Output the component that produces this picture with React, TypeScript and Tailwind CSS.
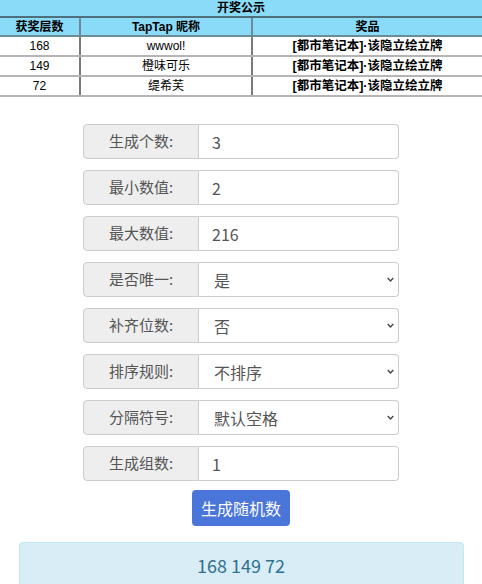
import { useState } from "react";

type Winner = { floor: number; nick: string; prize: string };

const winners: Winner[] = [
    { floor: 168, nick: "wwwol!", prize: "[都市笔记本]·该隐立绘立牌" },
    { floor: 149, nick: "橙味可乐", prize: "[都市笔记本]·该隐立绘立牌" },
    { floor: 72, nick: "缇希芙", prize: "[都市笔记本]·该隐立绘立牌" },
];

const cjk = "font-['Noto_Sans_CJK_SC','Noto_Sans',sans-serif]";
const tableFont = "font-['Liberation_Sans','Noto_Sans_CJK_SC',sans-serif]";

function InputRow({ label, value }: { label: string; value: string }) {
    return (
        <div className="flex h-[35px] w-full">
            <span className="flex w-[116px] shrink-0 items-center justify-center rounded-l-[4px] border border-[#ccc] bg-[#eee] text-[15px] text-[#555]">
                {label}
            </span>
            <input
                defaultValue={value}
                className="min-w-0 flex-1 rounded-r-[4px] border border-l-0 border-[#ccc] bg-white pl-[13px] text-[16px] text-[#555] outline-none"
            />
        </div>
    );
}

function SelectRow({ label, options }: { label: string; options: string[] }) {
    return (
        <div className="flex h-[35px] w-full">
            <span className="flex w-[116px] shrink-0 items-center justify-center rounded-l-[4px] border border-[#ccc] bg-[#eee] text-[15px] text-[#555]">
                {label}
            </span>
            <div className="relative flex-1">
                <select className="h-full w-full appearance-none rounded-r-[4px] border border-l-0 border-[#ccc] bg-white pl-[15px] text-[16px] text-[#555] outline-none">
                    {options.map((o) => (
                        <option key={o}>{o}</option>
                    ))}
                </select>
                <svg
                    viewBox="0 0 10 6"
                    className="pointer-events-none absolute right-[5px] top-[15px] h-[5px] w-[7px]"
                >
                    <path d="M1 1 L5 5 L9 1" fill="none" stroke="#444" strokeWidth="2" />
                </svg>
            </div>
        </div>
    );
}

export default function App() {
    const [result] = useState("168 149 72");

    return (
        <div className={`min-h-[584px] bg-white ${cjk}`}>
            <table className={`w-full border-collapse text-[12px] leading-[14px] text-black ${tableFont}`}>
                <thead>
                    <tr className="h-[17px] bg-[#89dbf8]">
                        <th colSpan={3} className="h-[17px] border-b-2 border-[#4d6f7c] p-0 text-center align-middle font-bold">
                            开奖公示
                        </th>
                    </tr>
                    <tr className="h-[19px] bg-[#89dbf8]">
                        <th className="h-[19px] w-[80px] border-b-2 border-r-2 border-[#6e8a95] p-0 font-bold">获奖层数</th>
                        <th className="h-[19px] w-[172px] border-b-2 border-r-2 border-[#6e8a95] p-0 font-bold">TapTap 昵称</th>
                        <th className="h-[19px] border-b-2 border-[#6e8a95] p-0 font-bold">奖品</th>
                    </tr>
                </thead>
                <tbody>
                    {winners.map((w) => (
                        <tr key={w.floor} className="h-[20px]">
                            <td className="h-[20px] border-b-2 border-r-2 border-b-[#b5b5b5] border-r-[#7a7a7a] p-0 text-center">
                                {w.floor}
                            </td>
                            <td className="h-[20px] border-b-2 border-r-2 border-b-[#b5b5b5] border-r-[#7a7a7a] p-0 text-center">
                                {w.nick}
                            </td>
                            <td className="h-[20px] border-b-2 border-b-[#b5b5b5] p-0 text-center text-[12.5px] font-bold">
                                {w.prize}
                            </td>
                        </tr>
                    ))}
                </tbody>
            </table>

            <div className="mx-auto mt-[27px] flex w-[316px] flex-col gap-[11px]">
                <InputRow label="生成个数:" value="3" />
                <InputRow label="最小数值:" value="2" />
                <InputRow label="最大数值:" value="216" />
                <SelectRow label="是否唯一:" options={["是", "否"]} />
                <SelectRow label="补齐位数:" options={["否", "是"]} />
                <SelectRow label="排序规则:" options={["不排序", "升序", "降序"]} />
                <SelectRow label="分隔符号:" options={["默认空格", "逗号", "换行"]} />
                <InputRow label="生成组数:" value="1" />
            </div>

            <div className="mt-[9px] flex justify-center">
                <button className="h-[36px] w-[98px] rounded-[4px] bg-[#4a76d9] text-[16px] text-white">
                    生成随机数
                </button>
            </div>

            <div className="mx-auto mt-[16px] flex h-[60px] w-[445px] justify-center rounded-[4px] border border-[#bce8f1] bg-[#d9edf7] pt-[10px] text-[18px] leading-[24px] text-[#31708f]">
                {result}
            </div>
        </div>
    );
}
